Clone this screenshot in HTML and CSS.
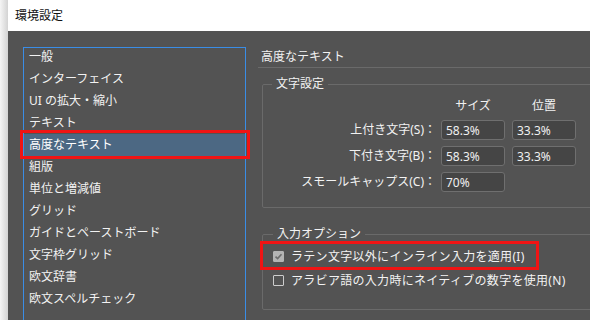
FILE: index.html
```html
<!DOCTYPE html>
<html>
  <head>
    <title>環境設定</title>
    <link rel="stylesheet" href="styles.css">
  </head>
  <body>
    <div class='window'>
      <div class='titlebar'>環境設定</div>
      <div class='content'>
        <ul class='nav'>
          <li>一般</li>
          <li>インターフェイス</li>
          <li>UI の拡大・縮小</li>
          <li>テキスト</li>
          <li class='selected'>高度なテキスト</li>
          <li>組版</li>
          <li>単位と増減値</li>
          <li>グリッド</li>
          <li>ガイドとペーストボード</li>
          <li>文字枠グリッド</li>
          <li>欧文辞書</li>
          <li>欧文スペルチェック</li>
        </ul>

        <section class='panel'>
          <h1 class='panel-title'>高度なテキスト</h1>

          <fieldset class='group chars'>
            <legend>文字設定</legend>
            <div class='char-grid'>
              <span></span>
              <span class='col-head'>サイズ</span>
              <span class='col-head'>位置</span>

              <label for='sup-size'>上付き文字(S)：</label>
              <input id='sup-size' type='text' value='58.3%'/>
              <input type='text' value='33.3%'/>

              <label for='sub-size'>下付き文字(B)：</label>
              <input id='sub-size' type='text' value='58.3%'/>
              <input type='text' value='33.3%'/>

              <label for='caps'>スモールキャップス(C)：</label>
              <input id='caps' type='text' value='70%'/>
            </div>
          </fieldset>

          <fieldset class='group options'>
            <legend>入力オプション</legend>
            <label class='check highlight'>
              <span class='box checked'>
                <svg width='9' height='9' viewBox='0 0 9 9'><path d='M1.5 4.6 L3.6 6.6 L7.5 2.2' fill='none' stroke='#6c6c6c' stroke-width='1.6'/></svg>
              </span>
              <span>ラテン文字以外にインライン入力を適用(I)</span>
            </label>
            <label class='check'>
              <span class='box'></span>
              <span>アラビア語の入力時にネイティブの数字を使用(N)</span>
            </label>
          </fieldset>
        </section>
      </div>
    </div>
  </body>
</html>
```

FILE: styles.css
```css
html, body {
  margin: 0;
  width: 590px;
  height: 320px;
  overflow: hidden;
  background: linear-gradient(to right, #f5f5f5, #d3d3d3 8px);
  font-family: 'Noto Sans', 'Noto Sans CJK JP', sans-serif;
  font-size: 12px;
}

/* window frame */
.window {
  margin-left: 8px;
  height: 320px;
  display: flex;
  flex-direction: column;
  overflow: hidden;
}

.titlebar {
  flex: none;
  height: 31px;
  line-height: 31px;
  padding-left: 7px;
  background: #fff;
  color: #111;
}

.content {
  flex: 1;
  min-height: 0;
  display: flex;
  padding: 16px 0 0 15px;
  background: #535353;
  color: #f2f2f2;
}

/* category list */
.nav {
  flex: none;
  width: 221px;
  margin: 0;
  padding: 0;
  list-style: none;
  border: 1px solid #3a8de6;
  border-bottom: none;
}

.nav li {
  height: 22px;
  line-height: 22px;
  padding-left: 5px;
  white-space: nowrap;
}

.nav li:first-child {
  margin-top: -2px;
}

.nav .selected {
  position: relative;
  background: #4c6883;
  color: #fff;
}

.nav .selected::after {
  content: '';
  position: absolute;
  left: -4px;
  top: -4px;
  width: 230px;
  height: 29px;
  box-sizing: border-box;
  border: 3px solid #f01414;
}

/* settings panel */
.panel {
  flex: none;
  width: 360px;
  margin-left: 12px;
}

.panel-title {
  margin: 0;
  height: 20px;
  line-height: 20px;
  padding-left: 3px;
  font-size: 12px;
  font-weight: normal;
  border-bottom: 1px solid #6a6a6a;
}

.group {
  margin: 8px 0 0 4px;
  min-width: 0;
  border: 1px solid #6a6a6a;
  border-radius: 2px;
}

.group legend {
  padding: 0 4px;
  line-height: 16px;
}

.chars {
  padding: 5px 0 15px 9px;
}

.char-grid {
  display: grid;
  grid-template-columns: 169px 71px 64px;
  grid-template-rows: 17px 20px 20px 20px;
  row-gap: 6px;
}

.col-head {
  width: 64px;
  text-align: center;
  line-height: 17px;
}

.char-grid label {
  padding-right: 5px;
  text-align: right;
  line-height: 20px;
  white-space: nowrap;
}

.char-grid input {
  width: 64px;
  height: 20px;
  box-sizing: border-box;
  margin: 0;
  padding: 0 4px;
  background: #454545;
  border: 1px solid #6f6f6f;
  border-radius: 3px;
  color: #f0f0f0;
  font: inherit;
}

/* input options */
.options {
  margin-top: 18px;
  padding: 2px 0 17px 10px;
}

.check {
  position: relative;
  display: flex;
  align-items: center;
  gap: 7px;
  height: 24px;
  white-space: nowrap;
  letter-spacing: 0.3px;
}

.box {
  flex: none;
  width: 11px;
  height: 11px;
  box-sizing: border-box;
  border: 1px solid #cdcdcd;
  border-radius: 1px;
  display: flex;
  align-items: center;
  justify-content: center;
}

.box.checked {
  background: #b4b4b4;
  border-color: #b4b4b4;
}

.highlight::after {
  content: '';
  position: absolute;
  left: -13px;
  top: -3px;
  width: 279px;
  height: 29px;
  box-sizing: border-box;
  border: 3px solid #f01414;
}
```
